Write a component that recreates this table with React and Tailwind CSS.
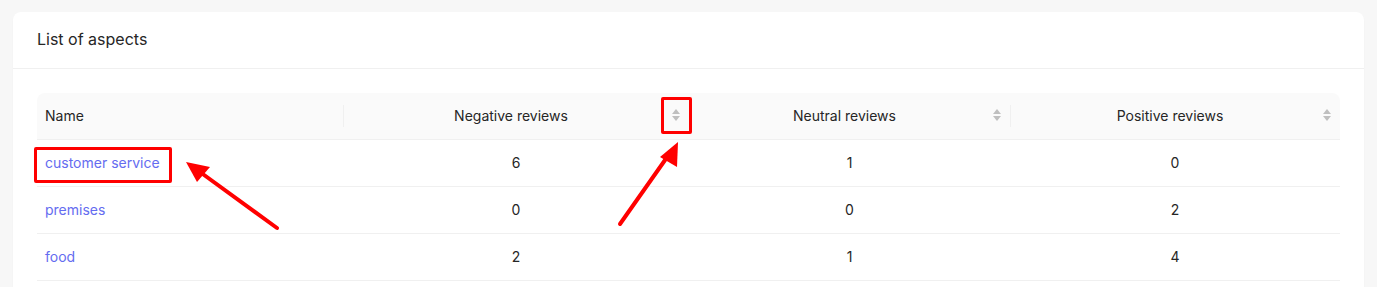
import React from "react";

const rows = [
  { name: "customer service", negative: 6, neutral: 1, positive: 0 },
  { name: "premises", negative: 0, neutral: 0, positive: 2 },
  { name: "food", negative: 2, neutral: 1, positive: 4 },
];

function SortIcon() {
  return (
    <svg width="10" height="14" viewBox="0 0 10 14" className="shrink-0">
      <path d="M5 1 L9 6 L1 6 Z" fill="#bfbfbf" />
      <path d="M1 8 L9 8 L5 13 Z" fill="#bfbfbf" />
    </svg>
  );
}

function HeaderCell({ title, sortable, divider, width }) {
  return (
    <div className={`relative flex items-center h-full px-2 pb-[2px] ${width}`}>
      {divider && <span className="absolute left-0 top-1/2 -translate-y-1/2 h-[22px] w-px bg-[#f0f0f0]" />}
      {sortable ? (
        <>
          <span className="flex-1 text-center">{title}</span>
          <SortIcon />
        </>
      ) : (
        <span>{title}</span>
      )}
    </div>
  );
}

export default function App() {
  return (
    <div className="relative h-[287px] overflow-hidden bg-[#f7f7f7] pt-3 px-[13px] font-['Inter',sans-serif] text-[14px] text-[#262626]">
      <div className="bg-white rounded-lg shadow-[0_1px_2px_rgba(0,0,0,0.03)]">
        <div className="h-[57px] flex items-center px-6 pb-[2px] border-b border-[#f0f0f0] text-[16px] font-normal text-[#262626]">
          List of aspects
        </div>
        <div className="px-6 pt-6 pb-6">
          {/* header */}
          <div className="flex h-[47px] bg-[#fafafa] rounded-t-lg border-b border-[#f0f0f0]">
            <HeaderCell title="Name" width="w-[306px]" />
            <HeaderCell title="Negative reviews" sortable divider width="w-[346px]" />
            <HeaderCell title="Neutral reviews" sortable divider width="w-[321px]" />
            <HeaderCell title="Positive reviews" sortable divider width="flex-1" />
          </div>
          {rows.map((r) => (
            <div key={r.name} className="flex h-[47px] items-center pb-[2px] border-b border-[#f0f0f0]">
              <div className="w-[306px] px-2">
                <a className="text-[#646cf0]">{r.name}</a>
              </div>
              <div className="w-[346px] px-2 text-center">{r.negative}</div>
              <div className="w-[321px] px-2 text-center">{r.neutral}</div>
              <div className="flex-1 px-2 text-center">{r.positive}</div>
            </div>
          ))}
        </div>
      </div>

      {/* annotations */}
      <div className="absolute left-[34px] top-[147px] w-[138px] h-[36px] border-[3px] border-[#ff0000] rounded-[2px]" />
      <div className="absolute left-[661px] top-[97px] w-[31px] h-[37px] border-[3px] border-[#ff0000] rounded-[2px]" />
      <svg className="absolute left-0 top-0" width="1377" height="287" viewBox="0 0 1377 287">
        <line x1="277" y1="228" x2="200" y2="172" stroke="#ff0000" strokeWidth="4" strokeLinecap="round" />
        <path d="M186 162 L210 167 L197 182 Z" fill="#ff0000" />
        <line x1="620" y1="224" x2="670" y2="153" stroke="#ff0000" strokeWidth="4" strokeLinecap="round" />
        <path d="M678 142 L677 167 L660 157 Z" fill="#ff0000" />
      </svg>
    </div>
  );
}
